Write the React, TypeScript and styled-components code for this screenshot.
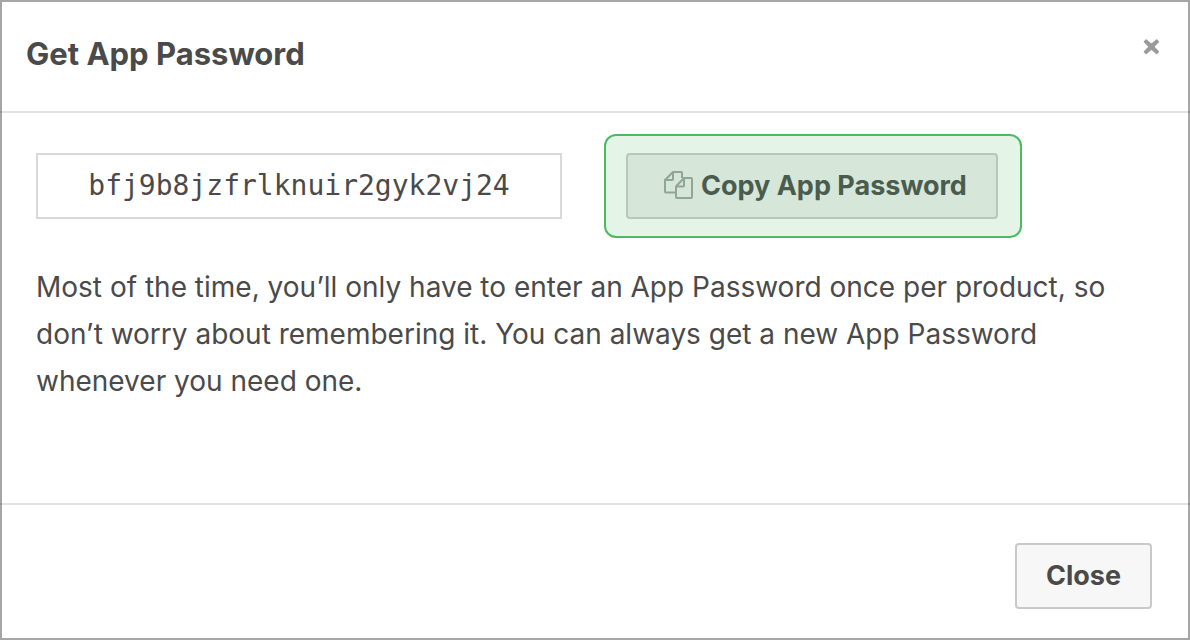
import React from 'react';
import styled, { createGlobalStyle } from 'styled-components';

const GlobalStyle = createGlobalStyle`
  * { box-sizing: border-box; }
  body {
    margin: 0;
    background: #fff;
    color: #4a4a4a;
    font-family: Inter, "Liberation Sans", sans-serif;
  }
`;

const Modal = styled.section`
  position: relative;
  display: flex;
  flex-direction: column;
  min-height: 100vh;
  background: #fff;

  &::after {
    content: '';
    position: absolute;
    inset: 0;
    border: 2px solid rgba(0, 0, 0, 0.35);
    pointer-events: none;
  }
`;

const Header = styled.header`
  display: flex;
  justify-content: space-between;
  align-items: flex-start;
  padding: 34px 28px 37px 26px;
  border-bottom: 2px solid #e1e1e1;
`;

const Title = styled.h1`
  margin: 0;
  font-size: 31px;
  line-height: 40px;
  font-weight: 700;
`;

const Dismiss = styled.button`
  display: flex;
  margin-top: 4px;
  padding: 0;
  border: 0;
  background: none;
  color: #999b9a;
  cursor: pointer;
`;

const Body = styled.div`
  flex: 1;
  padding: 21px 36px;
`;

const PasswordRow = styled.div`
  display: flex;
  align-items: center;
  gap: 42px;
`;

const PasswordInput = styled.input`
  width: 526px;
  height: 66px;
  padding: 0 0 2px;
  border: 2px solid #d9d9d9;
  background: #fff;
  color: #4a4a4a;
  font-family: "DejaVu Sans Mono", monospace;
  font-size: 28px;
  text-align: center;
`;

const Highlight = styled.div`
  padding: 17px 22px 17px 20px;
  border: 2px solid #4dba62;
  border-radius: 12px;
  background: #e4f4e7;
`;

const Button = styled.button<{ $tone: 'green' | 'plain' }>`
  display: flex;
  align-items: center;
  justify-content: center;
  gap: 8px;
  height: 66px;
  padding: ${(p) => (p.$tone === 'green' ? '0 29px 2px 36px' : '0 29px 2px')};
  border: 2px solid ${(p) => (p.$tone === 'green' ? '#b6c8ba' : '#c9c9c9')};
  border-radius: 4px;
  background: ${(p) => (p.$tone === 'green' ? '#d6e6d9' : '#f7f7f7')};
  color: ${(p) => (p.$tone === 'green' ? '#4a5c4e' : '#4a4a4a')};
  font-family: inherit;
  font-size: 27px;
  font-weight: 700;
  white-space: nowrap;
  cursor: pointer;
`;

const Note = styled.p`
  margin: 26px 0 0;
  font-size: 28px;
  line-height: 47px;
`;

const Footer = styled.footer`
  display: flex;
  justify-content: flex-end;
  padding: 38px 38px 31px;
  border-top: 2px solid #e1e1e1;
`;

const CloseIcon = () => (
  <svg width="22" height="18" viewBox="0 0 22 18" aria-hidden="true">
    <path
      d="M6.2 2 11.4 6.6 16.6 2 18.4 3.8 13.6 8.8 18.4 13.8 16.6 15.6 11.4 11 6.2 15.6 4.4 13.8 9.2 8.8 4.4 3.8Z"
      fill="currentColor"
      stroke="currentColor"
      strokeWidth="1.4"
      strokeLinejoin="round"
    />
  </svg>
);

const CopyIcon = () => (
  <svg width="29" height="28" viewBox="0 0 29 28" fill="none" stroke="#8fa695" strokeWidth="2" strokeLinejoin="round" aria-hidden="true">
    <path d="M11 21.5H2Q1 21.5 1 20.5V9L9 1H17Q18 1 18 2V7" />
    <path d="M9 1V8Q9 9 8 9H1" />
    <path d="M12 15.5 20 7H27Q28 7 28 8V26Q28 27 27 27H13Q12 27 12 26Z" />
    <path d="M20 7V14.5Q20 15.5 19 15.5H12" />
  </svg>
);

export default function App() {
  return (
    <>
      <GlobalStyle />
      <Modal role="dialog" aria-labelledby="dialog-title">
        <Header>
          <Title id="dialog-title">Get App Password</Title>
          <Dismiss type="button" aria-label="Dismiss">
            <CloseIcon />
          </Dismiss>
        </Header>
        <Body>
          <PasswordRow>
            <PasswordInput aria-label="App Password" readOnly value="bfj9b8jzfrlknuir2gyk2vj24" />
            <Highlight>
              <Button type="button" $tone="green">
                <CopyIcon />
                Copy App Password
              </Button>
            </Highlight>
          </PasswordRow>
          <Note>
            Most of the time, you’ll only have to enter an App Password once per product, so don’t worry about
            remembering it. You can always get a new App Password whenever you need one.
          </Note>
        </Body>
        <Footer>
          <Button type="button" $tone="plain">
            Close
          </Button>
        </Footer>
      </Modal>
    </>
  );
}
